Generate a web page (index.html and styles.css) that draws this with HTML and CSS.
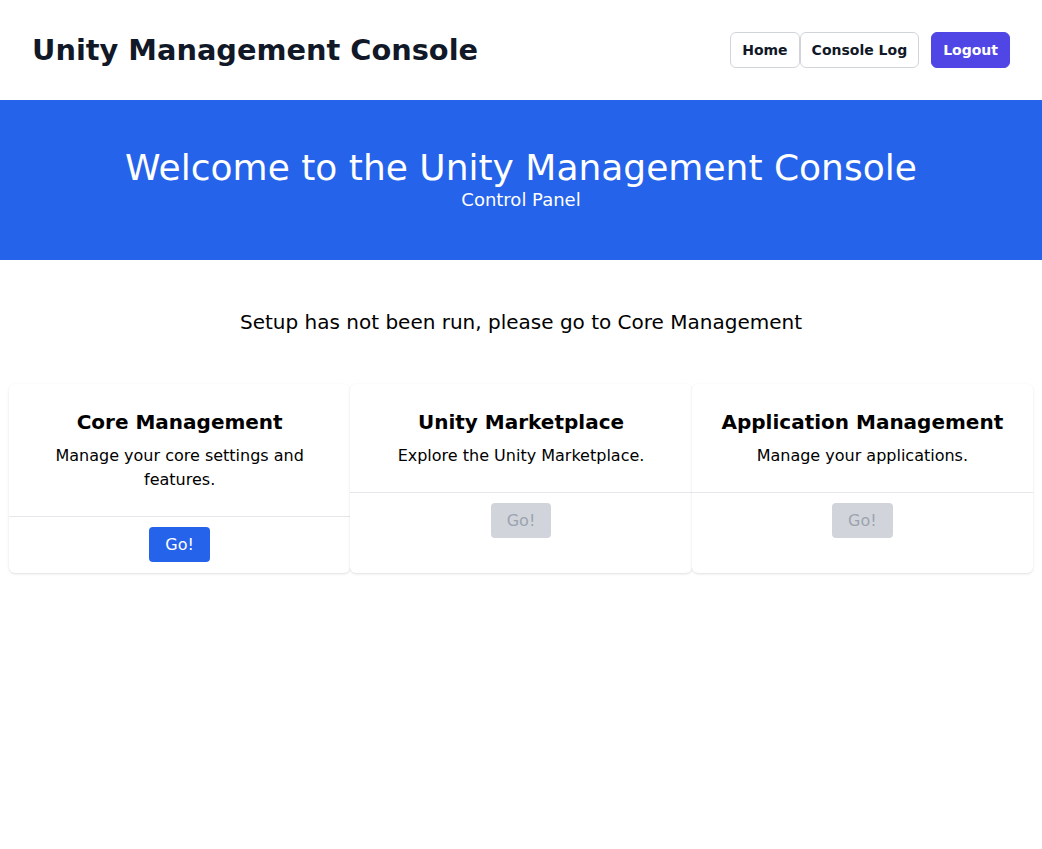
FILE: index.html
```html
<!DOCTYPE html>
<html lang="en">
<head>
<meta charset="utf-8">
<title>Unity Management Console</title>
<link rel="stylesheet" href="styles.css">
</head>
<body>
<header class="topbar">
  <h1 class="brand">Unity Management Console</h1>
  <nav class="nav">
    <div class="nav-group">
      <a class="nav-btn" href="#">Home</a>
      <a class="nav-btn" href="#">Console Log</a>
    </div>
    <a class="logout-btn" href="#">Logout</a>
  </nav>
</header>
<section class="hero">
  <h2 class="hero-title">Welcome to the Unity Management Console</h2>
  <p class="hero-sub">Control Panel</p>
</section>
<main class="main">
  <p class="notice">Setup has not been run, please go to Core Management</p>
  <div class="cards">
    <div class="card">
      <div class="card-body">
        <h3 class="card-title">Core Management</h3>
        <p class="card-desc">Manage your core settings and features.</p>
      </div>
      <div class="card-foot">
        <button class="go-btn">Go!</button>
      </div>
    </div>
    <div class="card">
      <div class="card-body">
        <h3 class="card-title">Unity Marketplace</h3>
        <p class="card-desc">Explore the Unity Marketplace.</p>
      </div>
      <div class="card-foot">
        <button class="go-btn disabled" disabled>Go!</button>
      </div>
    </div>
    <div class="card">
      <div class="card-body">
        <h3 class="card-title">Application Management</h3>
        <p class="card-desc">Manage your applications.</p>
      </div>
      <div class="card-foot">
        <button class="go-btn disabled" disabled>Go!</button>
      </div>
    </div>
  </div>
</main>
</body>
</html>
```
FILE: styles.css
```css
* { box-sizing: border-box; }
html, body { margin: 0; padding: 0; }
body {
  font-family: "DejaVu Sans", sans-serif;
  background: #ffffff;
  color: #000000;
}
.topbar {
  display: flex;
  align-items: center;
  justify-content: space-between;
  padding: 32px;
  height: 100px;
}
.brand {
  margin: 0;
  font-size: 28.8px;
  line-height: 36px;
  font-weight: 700;
  color: #111827;
}
.nav {
  display: flex;
  align-items: center;
  gap: 12px;
}
.nav-group { display: flex; }
.nav-btn, .logout-btn {
  display: inline-block;
  font-size: 14px;
  line-height: 20px;
  font-weight: 700;
  text-decoration: none;
  padding: 7px 11px;
  border-radius: 6px;
  border: 1px solid #d1d5db;
  color: #111827;
  background: #ffffff;
}
.logout-btn {
  background: #4f46e5;
  border-color: #4f46e5;
  color: #ffffff;
}
.hero {
  background: #2563eb;
  color: #ffffff;
  text-align: center;
  padding: 48px 16px;
}
.hero-title {
  margin: 0;
  font-size: 36px;
  line-height: 40px;
  font-weight: 400;
}
.hero-sub {
  margin: 0;
  font-size: 18px;
  line-height: 24px;
}
.main {
  max-width: 1024px;
  margin: 0 auto;
  padding: 48px 0;
}
.notice {
  margin: 0 0 48px;
  text-align: center;
  font-size: 20px;
  line-height: 28px;
}
.cards {
  display: grid;
  grid-template-columns: repeat(3, 1fr);
}
.card {
  background: #ffffff;
  border-radius: 6px;
  box-shadow: 0 1px 3px 0 rgba(0,0,0,0.1), 0 1px 2px -1px rgba(0,0,0,0.1);
  text-align: center;
}
.card-body {
  padding: 24px;
}
.card-title {
  margin: 0 0 8px;
  font-size: 20px;
  line-height: 28px;
  font-weight: 700;
}
.card-desc {
  margin: 0;
  font-size: 16px;
  line-height: 24px;
}
.card-foot {
  border-top: 1px solid #e5e7eb;
  padding: 10px 10px 11px;
}
.go-btn {
  font-family: inherit;
  font-size: 16px;
  line-height: 23px;
  padding: 6px 16px;
  border: 0;
  border-radius: 4px;
  background: #2563eb;
  color: #ffffff;
  cursor: pointer;
}
.go-btn.disabled {
  background: #d1d5db;
  color: #9ca3af;
  cursor: not-allowed;
}
```
